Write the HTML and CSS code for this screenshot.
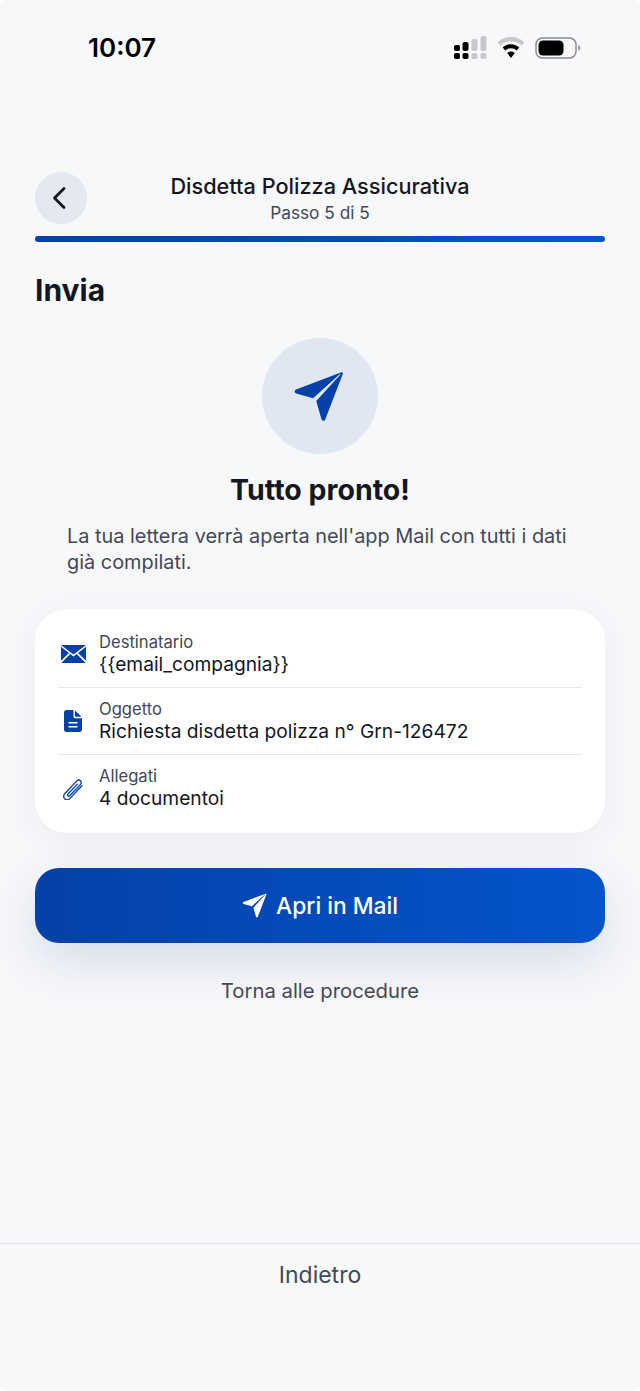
FILE: index.html
```html
<!DOCTYPE html>
<html lang="it">
<head>
<meta charset="UTF-8">
<meta name="viewport" content="width=device-width, initial-scale=1.0">
<title>Invia</title>
<link rel="stylesheet" href="styles.css">
</head>
<body>
<div class="screen">
    <!-- Status bar -->
    <div class="status-bar">
        <span class="clock">10:07</span>
        <div class="status-icons">
            <svg width="33" height="24" viewBox="0 0 33 24">
                <g fill="#000">
                    <rect x="0" y="9" width="6" height="6" rx="1.800"/>
                    <rect x="0" y="17" width="6" height="6" rx="1.800"/>
                    <rect x="8.500" y="6" width="6" height="9" rx="2.200"/>
                    <rect x="8.500" y="17" width="6" height="6" rx="1.800"/>
                </g>
                <g fill="#c6c8cc">
                    <rect x="17.500" y="3" width="6" height="12" rx="2.200"/>
                    <rect x="17.500" y="17" width="6" height="6" rx="1.800"/>
                    <rect x="26.500" y="0" width="6" height="15" rx="2.200"/>
                    <rect x="26.500" y="17" width="6" height="6" rx="1.800"/>
                </g>
            </svg>
            <svg class="wifi" width="28" height="22" viewBox="0 0 28 22">
                <path d="M14 0C8.800 0 4 2 .6 5.400l2.800 3.100C6.100 5.800 9.900 4.200 14 4.200s7.900 1.600 10.600 4.300l2.800-3.100C24 2 19.200 0 14 0z" fill="#c6c8cc"/>
                <path d="M14 7.200c-3.300 0-6.200 1.300-8.300 3.400l2.700 2.900c1.500-1.400 3.400-2.300 5.600-2.300s4.100.9 5.600 2.300l2.700-2.900C20.200 8.500 17.300 7.200 14 7.200z" fill="#000"/>
                <path d="M14 14.500c-1.500 0-2.900.6-3.800 1.600L14 21l3.800-4.900c-.9-1-2.300-1.600-3.800-1.600z" fill="#000"/>
            </svg>
            <svg class="battery" width="46" height="22" viewBox="0 0 46 22">
                <rect x="1" y="1" width="40" height="20" rx="6.500" fill="none" stroke="#8b8d91" stroke-width="1.500"/>
                <rect x="3.500" y="3.500" width="25" height="15" rx="4.500" fill="#000"/>
                <path d="M43 8c1.500.4 2.500 1.600 2.500 3s-1 2.600-2.500 3z" fill="#a4a6aa"/>
            </svg>
        </div>
    </div>

    <!-- Header -->
    <div class="header">
        <div class="back-btn">
            <svg width="16" height="24" viewBox="0 0 16 24">
                <path d="M12 2.500 2.500 12 12 21.500" fill="none" stroke="#14171f" stroke-width="2.800" stroke-linecap="round" stroke-linejoin="round"/>
            </svg>
        </div>
        <div class="header-text">
            <div class="header-title">Disdetta Polizza Assicurativa</div>
            <div class="header-step">Passo 5 di 5</div>
        </div>
    </div>
    <div class="progress"></div>

    <!-- Content -->
    <div class="content">
        <h1>Invia</h1>
        <div class="hero-circle">
            <svg class="hero-plane" width="51" height="51" viewBox="0 0 50 50">
                <path d="M47.500 1.300 3 18.200c-1.900.8-1.800 3.200.1 3.800l16.600 4.600L45.700 3.100c.4-.4 1 .2.600.6L22.800 29.500l5.100 17.800c.6 1.900 3 2 3.700.2L48.800 3c.4-1.100-.3-2.100-1.300-1.700z" fill="#0441a8"/>
            </svg>
        </div>
        <h2>Tutto pronto!</h2>
        <p class="intro">La tua lettera verrà aperta nell'app Mail con tutti i dati già compilati.</p>

        <div class="card">
            <div class="row">
                <div class="row-icon">
                    <svg width="25" height="18" viewBox="0 0 26 20" preserveAspectRatio="none">
                        <path d="M1.500 0h23c.5 0 .9.100 1.200.3L13 10.600.3.300C.6.100 1 0 1.500 0z" fill="#0441a8"/>
                        <path d="M0 2 8.300 8.800 0 17.500zM26 2l-8.300 6.800L26 17.500z" fill="#0441a8"/>
                        <path d="M9.700 10 13 12.700 16.300 10l9.200 9.700c-.2.200-.6.300-1 .3h-23c-.4 0-.8-.1-1-.3z" fill="#0441a8"/>
                    </svg>
                </div>
                <div class="row-text">
                    <div class="row-label">Destinatario</div>
                    <div class="row-value">{{email_compagnia}}</div>
                </div>
            </div>
            <div class="row">
                <div class="row-icon">
                    <svg width="18" height="22" viewBox="0 0 18 22">
                        <path d="M2.500 0H9.500v6.500c0 1 .8 1.800 1.800 1.800H18v11.200c0 1.400-1.100 2.500-2.500 2.500h-13C1.100 22 0 20.900 0 19.500v-17C0 1.100 1.100 0 2.500 0zM4.500 12v1.500h9V12zM4.500 16v1.500h9V16z" fill="#0441a8" fill-rule="evenodd"/>
                        <path d="M11 .5 17.500 6.800H11.500c-.3 0-.5-.2-.5-.5z" fill="#0441a8"/>
                    </svg>
                </div>
                <div class="row-text">
                    <div class="row-label">Oggetto</div>
                    <div class="row-value">Richiesta disdetta polizza n° Grn-126472</div>
                </div>
            </div>
            <div class="row">
                <div class="row-icon">
                    <svg width="20" height="22" viewBox="2 0 18 20" preserveAspectRatio="none">
                        <path d="M19 7 8.300 18.500c-1.400 1.500-3.500 1.600-4.800.4-1.300-1.200-1.200-3.300.2-4.800L14.300 2.800c1-1 2.400-1.200 3.400-.3 1 .9.900 2.400-.1 3.500L8.100 16.100c-.5.500-1.200.6-1.700.2-.5-.5-.4-1.200.1-1.700l8.500-9" fill="none" stroke="#0441a8" stroke-width="1.200" stroke-linecap="round" stroke-linejoin="round"/>
                    </svg>
                </div>
                <div class="row-text">
                    <div class="row-label">Allegati</div>
                    <div class="row-value">4 documentoi</div>
                </div>
            </div>
        </div>

        <div class="mail-btn">
            <svg width="25" height="25" viewBox="0 0 50 50">
                <path d="M47.500 1.300 3 18.200c-1.900.8-1.800 3.200.1 3.800l16.600 4.600L45.700 3.100c.4-.4 1 .2.600.6L22.800 29.500l5.100 17.800c.6 1.900 3 2 3.700.2L48.800 3c.4-1.100-.3-2.100-1.300-1.700z" fill="#fff"/>
            </svg>
            <span>Apri in Mail</span>
        </div>
        <div class="back-link">Torna alle procedure</div>
    </div>

    <!-- Footer -->
    <div class="footer">Indietro</div>
</div>
</body>
</html>
```

FILE: styles.css
```css
* {
    box-sizing: border-box;
}

body {
    margin: 0;
    background-color: #fff;
    font-family: Inter, "Noto Sans", sans-serif;
    color: #14171f;
}

.screen {
    width: 640px;
    height: 1391px;
    display: flex;
    flex-direction: column;
    overflow: hidden;
    border-radius: 6px;
    background-color: #f7f8fa;
}

/* Status bar */
.status-bar {
    height: 172px;
    flex-shrink: 0;
    display: flex;
    justify-content: space-between;
    align-items: flex-start;
    padding: 31px 59px 0 88px;
}

.clock {
    font-size: 26px;
    line-height: 34px;
    font-weight: 600;
    color: #000;
}

.status-icons {
    display: flex;
    align-items: center;
    gap: 10px;
    padding-top: 5px;
}

/* Header */
.header {
    display: flex;
    align-items: center;
    height: 52px;
    padding: 0 35px;
}

.back-btn {
    width: 52px;
    height: 52px;
    flex-shrink: 0;
    padding-right: 3px;
    border-radius: 50%;
    background-color: #e6e8ef;
    display: flex;
    align-items: center;
    justify-content: center;
}

.header-text {
    flex: 1;
    margin-right: 52px;
    text-align: center;
}

.header-title {
    font-size: 21.700px;
    line-height: 28px;
    font-weight: 500;
}

.header-step {
    font-size: 17.300px;
    line-height: 22px;
    margin-top: 2px;
    color: #444854;
}

.progress {
    height: 6px;
    margin: 12px 35px 0;
    border-radius: 3px;
    background: linear-gradient(90deg, #0441a8, #0454cc);
}

/* Content */
.content {
    flex: 1;
    padding: 0 35px;
    display: flex;
    flex-direction: column;
    align-items: center;
}

h1 {
    align-self: flex-start;
    margin: 30px 0 0;
    font-size: 30px;
    line-height: 36px;
    font-weight: 700;
}

.hero-circle {
    width: 116px;
    height: 116px;
    margin-top: 30px;
    border-radius: 50%;
    background-color: #e1e7f1;
    display: flex;
    align-items: center;
    justify-content: center;
}

.hero-plane {
    margin-right: 3px;
}

h2 {
    margin: 18px 0 0;
    font-size: 28.500px;
    line-height: 36px;
    font-weight: 700;
}

.intro {
    margin: 15px 0 0;
    padding: 0 32px;
    width: 100%;
    font-size: 19.900px;
    line-height: 26px;
    color: #444854;
}

.card {
    width: 100%;
    height: 224px;
    margin-top: 34px;
    padding: 12px 23px 0;
    border-radius: 32px;
    background-color: #fff;
    box-shadow: 0 8px 36px rgba(10, 50, 120, 0.06);
}

.row {
    display: flex;
    align-items: center;
    height: 67px;
    border-bottom: 1px solid #e6e8ef;
}

.row:last-child {
    border-bottom: none;
}

.row-icon {
    width: 30px;
    flex-shrink: 0;
    margin-right: 11px;
    display: flex;
    align-items: center;
    justify-content: center;
}

.row-label {
    font-size: 16.600px;
    line-height: 20px;
    color: #444854;
}

.row-value {
    font-size: 19.200px;
    line-height: 25px;
}

.mail-btn {
    width: 100%;
    height: 75px;
    margin-top: 35px;
    border-radius: 24px;
    background: linear-gradient(90deg, #0441a8, #0454cc);
    box-shadow: 0 18px 50px rgba(10, 50, 120, 0.14);
    color: #fff;
    font-size: 22.800px;
    font-weight: 500;
    display: flex;
    align-items: center;
    justify-content: center;
    gap: 9px;
}

.back-link {
    margin-top: 34px;
    font-size: 20.300px;
    line-height: 28px;
    font-weight: 400;
    color: #444854;
}

/* Footer */
.footer {
    height: 148px;
    flex-shrink: 0;
    padding-top: 17px;
    border-top: 1px solid #dfe1e7;
    text-align: center;
    font-size: 23px;
    line-height: 28px;
    font-weight: 400;
    color: #444854;
}
```
